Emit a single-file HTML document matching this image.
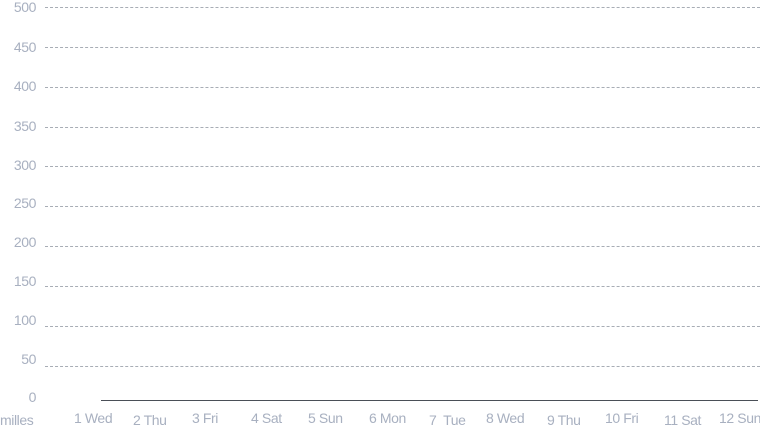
<!DOCTYPE html>
<html><head><style>
body{margin:0;width:760px;height:428px;background:#fff;position:relative;overflow:hidden;font-family:"Liberation Sans",sans-serif;color:#a8b0c0;font-size:14px;letter-spacing:-0.4px}
.g{position:absolute;left:45px;right:0;height:0;border-top:1px dashed #a8adb5}
.y{position:absolute;right:724px;line-height:14px;text-align:right}
.x{position:absolute;line-height:14px;white-space:nowrap}
</style></head><body>
<div class="g" style="top:7px"></div><div class="y" style="top:0px">500</div>
<div class="g" style="top:47px"></div><div class="y" style="top:40px">450</div>
<div class="g" style="top:87px"></div><div class="y" style="top:79px">400</div>
<div class="g" style="top:127px"></div><div class="y" style="top:119px">350</div>
<div class="g" style="top:166px"></div><div class="y" style="top:158px">300</div>
<div class="g" style="top:206px"></div><div class="y" style="top:196px">250</div>
<div class="g" style="top:246px"></div><div class="y" style="top:235px">200</div>
<div class="g" style="top:286px"></div><div class="y" style="top:274px">150</div>
<div class="g" style="top:326px"></div><div class="y" style="top:313px">100</div>
<div class="g" style="top:366px"></div><div class="y" style="top:352px">50</div>
<div class="y" style="top:390px">0</div>
<div style="position:absolute;left:101px;width:657px;top:400px;height:1px;background:#4a4f57"></div>
<div class="x" style="left:0;top:413px">milles</div>
<div class="x" style="left:74px;top:411px">1 Wed</div>
<div class="x" style="left:133px;top:413px">2 Thu</div>
<div class="x" style="left:192px;top:411px">3 Fri</div>
<div class="x" style="left:251px;top:411px">4 Sat</div>
<div class="x" style="left:308px;top:411px">5 Sun</div>
<div class="x" style="left:369px;top:411px">6 Mon</div>
<div class="x" style="left:429px;top:413px">7&nbsp; Tue</div>
<div class="x" style="left:486px;top:411px">8 Wed</div>
<div class="x" style="left:547px;top:413px">9 Thu</div>
<div class="x" style="left:605px;top:411px">10 Fri</div>
<div class="x" style="left:664px;top:413px">11 Sat</div>
<div class="x" style="left:719px;top:411px">12 Sun</div>
</body></html>
